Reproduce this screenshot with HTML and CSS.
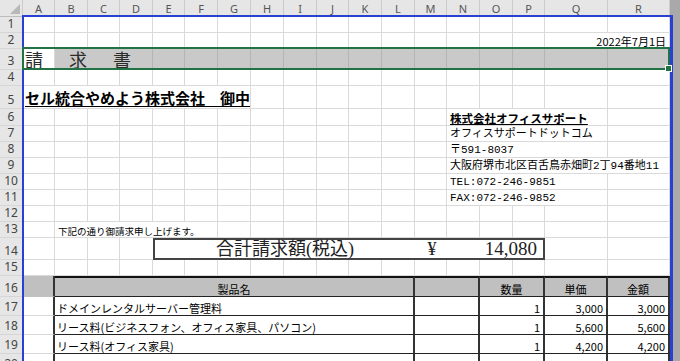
FILE: index.html
```html
<!DOCTYPE html>
<html lang="ja">
<head>
    <meta charset="UTF-8">
    <title>請求書</title>
    <link rel="stylesheet" href="styles.css">
</head>
<body>
<div class="sheet-wrap">
    <table class="sheet">
        <colgroup>
            <col class="c-head">
            <col class="w32"><col class="w33"><col class="w32"><col class="w33">
            <col class="w32"><col class="w33"><col class="w33"><col class="w33">
            <col class="w33"><col class="w32"><col class="w33"><col class="w33">
            <col class="w32"><col class="w33"><col class="w33"><col class="w32">
            <col class="w63"><col class="w62">
        </colgroup>
        <tr class="col-head">
            <th class="corner"></th>
            <th>A</th><th>B</th><th>C</th><th>D</th><th>E</th><th>F</th><th>G</th><th>H</th><th>I</th>
            <th>J</th><th>K</th><th>L</th><th>M</th><th>N</th><th>O</th><th>P</th><th>Q</th><th>R</th>
        </tr>
        <tr class="h16">
            <th class="rh">1</th>
            <td></td><td></td><td></td><td></td><td></td><td></td><td></td><td></td><td></td>
            <td></td><td></td><td></td><td></td><td></td><td></td><td></td><td></td><td></td>
        </tr>
        <tr class="h16">
            <th class="rh">2</th>
            <td></td><td></td><td></td><td></td><td></td><td></td><td></td><td></td>
            <td></td><td></td><td></td><td></td><td></td><td></td><td></td><td></td>
            <td colspan="2" class="date">2022年7月1日</td>
        </tr>
        <tr class="h21">
            <th class="rh">3</th>
            <td class="title-cell"><span class="title">請求書</span></td>
            <td colspan="3" class="band"></td>
            <td class="band"></td><td class="band"></td><td class="band"></td><td class="band"></td>
            <td class="band"></td><td class="band"></td><td class="band"></td><td class="band"></td>
            <td class="band"></td><td class="band"></td><td class="band"></td><td class="band"></td>
            <td class="band"></td><td class="band"></td>
        </tr>
        <tr class="h15">
            <th class="rh">4</th>
            <td></td><td></td><td></td><td></td><td></td><td></td><td></td><td></td><td></td>
            <td></td><td></td><td></td><td></td><td></td><td></td><td></td><td></td><td></td>
        </tr>
        <tr class="h23">
            <th class="rh">5</th>
            <td colspan="7" class="client">セル統合やめよう株式会社　御中</td>
            <td></td><td></td><td></td><td></td><td></td><td></td><td></td><td></td><td></td><td></td><td></td>
        </tr>
        <tr class="h17">
            <th class="rh">6</th>
            <td></td><td></td><td></td><td></td><td></td><td></td><td></td><td></td><td></td><td></td><td></td><td></td><td></td>
            <td colspan="4" class="addr addr-name">株式会社オフィスサポート</td>
            <td></td>
        </tr>
        <tr class="h16">
            <th class="rh">7</th>
            <td></td><td></td><td></td><td></td><td></td><td></td><td></td><td></td><td></td><td></td><td></td><td></td><td></td>
            <td colspan="4" class="addr">オフィスサポートドットコム</td>
            <td></td>
        </tr>
        <tr class="h16">
            <th class="rh">8</th>
            <td></td><td></td><td></td><td></td><td></td><td></td><td></td><td></td><td></td><td></td><td></td><td></td><td></td>
            <td colspan="4" class="addr">〒591-8037</td>
            <td></td>
        </tr>
        <tr class="h16">
            <th class="rh">9</th>
            <td></td><td></td><td></td><td></td><td></td><td></td><td></td><td></td><td></td><td></td><td></td><td></td><td></td>
            <td colspan="5" class="addr">大阪府堺市北区百舌鳥赤畑町2丁94番地11</td>
        </tr>
        <tr class="h16">
            <th class="rh">10</th>
            <td></td><td></td><td></td><td></td><td></td><td></td><td></td><td></td><td></td><td></td><td></td><td></td><td></td>
            <td colspan="4" class="addr">TEL:072-246-9851</td>
            <td></td>
        </tr>
        <tr class="h16">
            <th class="rh">11</th>
            <td></td><td></td><td></td><td></td><td></td><td></td><td></td><td></td><td></td><td></td><td></td><td></td><td></td>
            <td colspan="4" class="addr">FAX:072-246-9852</td>
            <td></td>
        </tr>
        <tr class="h16">
            <th class="rh">12</th>
            <td></td><td></td><td></td><td></td><td></td><td></td><td></td><td></td><td></td>
            <td></td><td></td><td></td><td></td><td></td><td></td><td></td><td></td><td></td>
        </tr>
        <tr class="h15">
            <th class="rh">13</th>
            <td></td>
            <td colspan="5" class="note">下記の通り御請求申し上げます。</td>
            <td></td><td></td><td></td><td></td><td></td><td></td><td></td><td></td><td></td><td></td><td></td><td></td>
        </tr>
        <tr class="h22">
            <th class="rh">14</th>
            <td></td><td></td><td></td><td class="no-r"></td>
            <td colspan="12" class="total-cell">
                <div class="total">
                    <span class="total-label">合計請求額(税込)</span>
                    <span class="total-yen">¥</span>
                    <span class="total-amount">14,080</span>
                </div>
            </td>
            <td></td><td></td>
        </tr>
        <tr class="h14">
            <th class="rh">15</th>
            <td></td><td></td><td></td><td></td><td></td><td></td><td></td><td></td><td></td>
            <td></td><td></td><td></td><td></td><td></td><td></td><td></td><td></td><td></td>
        </tr>
        <tr class="h21">
            <th class="rh">16</th>
            <td class="edge edge-gray"></td>
            <td colspan="11" class="th-cell">製品名</td>
            <td colspan="2" class="th-cell"></td>
            <td colspan="2" class="th-cell">数量</td>
            <td class="th-cell">単価</td>
            <td class="th-cell">金額</td>
        </tr>
        <tr class="h19">
            <th class="rh">17</th>
            <td class="edge"></td>
            <td colspan="11" class="item">ドメインレンタルサーバー管理料</td>
            <td colspan="2" class="item"></td>
            <td colspan="2" class="item num">1</td>
            <td class="item num">3,000</td>
            <td class="item num">3,000</td>
        </tr>
        <tr class="h19">
            <th class="rh">18</th>
            <td class="edge"></td>
            <td colspan="11" class="item">リース料(ビジネスフォン、オフィス家具、パソコン)</td>
            <td colspan="2" class="item"></td>
            <td colspan="2" class="item num">1</td>
            <td class="item num">5,600</td>
            <td class="item num">5,600</td>
        </tr>
        <tr class="h19">
            <th class="rh">19</th>
            <td class="edge"></td>
            <td colspan="11" class="item">リース料(オフィス家具)</td>
            <td colspan="2" class="item"></td>
            <td colspan="2" class="item num">1</td>
            <td class="item num">4,200</td>
            <td class="item num">4,200</td>
        </tr>
        <tr class="h19">
            <th class="rh">20</th>
            <td class="edge"></td>
            <td colspan="11" class="item"></td>
            <td colspan="2" class="item"></td>
            <td colspan="2" class="item num"></td>
            <td class="item num"></td>
            <td class="item num"></td>
        </tr>
    </table>
    <div class="print-area"></div>
    <div class="selection"><span class="handle"></span></div>
</div>
</body>
</html>
```

FILE: styles.css
```css
/* シート全体 */
body {
    margin: 0;
    background-color: #a9a9a9;
    font-family: "Noto Sans CJK JP", sans-serif;
}

.sheet-wrap {
    position: relative;
    width: 680px;
    height: 361px;
    overflow: hidden;
    background-color: #a9a9a9;
}

.sheet {
    table-layout: fixed;
    border-collapse: separate;
    border-spacing: 0;
    width: 670px;
    background-color: #fff;
    font-size: 11px;
    color: #000;
}

.c-head { width: 23px; }
.w32 { width: 32px; }
.w33 { width: 33px; }
.w63 { width: 63px; }
.w62 { width: 62px; }

.sheet td {
    border-right: 1px solid #dadada;
    border-bottom: 1px solid #dadada;
    padding: 0 2px;
    vertical-align: bottom;
    white-space: nowrap;
    line-height: 14px;
}

.h14 { height: 14px; }
.h15 { height: 15px; }
.h16 { height: 16px; }
.h17 { height: 17px; }
.h19 { height: 19px; }
.h21 { height: 21px; }
.h22 { height: 22px; }
.h23 { height: 23px; }

/* 見出し */
.col-head th {
    height: 16px;
    padding: 0;
    background-color: #e6e6e6;
    border-right: 1px solid #cbcbcb;
    border-bottom: 1px solid #bdbdbd;
    font-family: "Noto Sans", sans-serif;
    font-size: 11px;
    font-weight: normal;
    color: #555;
    text-align: center;
    vertical-align: middle;
}

.corner {
    position: relative;
}

.corner::after {
    content: "";
    position: absolute;
    right: 2px;
    bottom: 2px;
    border-left: 10px solid transparent;
    border-bottom: 10px solid #b8b8b8;
}

.rh {
    padding: 0 0 1px;
    background-color: #e6e6e6;
    border-right: 1px solid #cbcbcb;
    border-bottom: 1px solid #d6d6d6;
    font-family: "Noto Sans", sans-serif;
    font-size: 12px;
    font-weight: normal;
    color: #444;
    text-align: center;
    vertical-align: bottom;
    line-height: 14px;
}

/* 上部 */
.sheet td.date {
    text-align: right;
    padding-right: 3px;
    font-size: 11px;
}

.title-cell {
    padding-left: 3px;
}

.title {
    font-size: 18px;
    letter-spacing: 26px;
    line-height: 20px;
    color: #2b2b2b;
}

.sheet td.band {
    background-color: #c9c9c9;
    border-right-color: #b5b5b5;
}

.sheet td.client {
    padding-left: 2px;
    font-size: 15px;
    font-weight: bold;
    line-height: 20px;
    text-decoration: underline;
    text-underline-offset: 2px;
}

.sheet td.addr {
    padding-left: 3px;
    font-family: "Liberation Mono", "Noto Sans CJK JP", monospace;
    font-size: 11px;
}

.sheet td.addr-name {
    font-family: "Noto Sans CJK JP", sans-serif;
    font-weight: bold;
    font-size: 11.5px;
    text-decoration: underline;
}

.sheet td.note {
    padding-left: 3px;
    font-size: 9.5px;
    line-height: 12px;
}

.sheet td.no-r {
    border-right: none;
}

/* 合計 */
.sheet td.total-cell {
    padding: 0;
    border: 2px solid #444;
    vertical-align: middle;
}

.total {
    display: grid;
    grid-template-columns: 260px 34px 1fr;
    align-items: center;
    font-family: "Liberation Serif", "Noto Sans CJK JP", serif;
    font-size: 18px;
    line-height: 18px;
    color: #222;
}

.total-label {
    text-align: center;
}

.total-yen {
    text-align: center;
}

.total-amount {
    text-align: right;
    padding-right: 6px;
    font-size: 19px;
}

/* 明細 */
.sheet td.edge {
    border-right: 2px solid #333;
}

.sheet td.edge-gray {
    background-color: #c0c0c0;
    border-bottom-color: #c0c0c0;
}

.sheet td.th-cell {
    background-color: #c0c0c0;
    border-top: 2px solid #111;
    border-right: 2px solid #333;
    border-bottom: 1px solid #222;
    text-align: center;
}

.sheet td.item {
    border-right: 2px solid #333;
    border-bottom: 1px solid #222;
    padding-left: 2px;
}

.sheet td.num {
    text-align: right;
    padding-right: 3px;
}

/* 印刷範囲と選択枠 */
.print-area {
    position: absolute;
    left: 22px;
    top: 15px;
    width: 651px;
    height: 400px;
    box-sizing: border-box;
    border-left: 2px solid #2a3fd4;
    border-top: 2px solid #2a3fd4;
    border-right: 3px solid #2a3fd4;
}

.selection {
    position: absolute;
    left: 22px;
    top: 47px;
    width: 648px;
    height: 23px;
    box-sizing: border-box;
    border: 2px solid #217346;
}

.handle {
    position: absolute;
    right: -4px;
    bottom: -4px;
    width: 5px;
    height: 5px;
    background-color: #217346;
    border: 1px solid #fff;
}
```
